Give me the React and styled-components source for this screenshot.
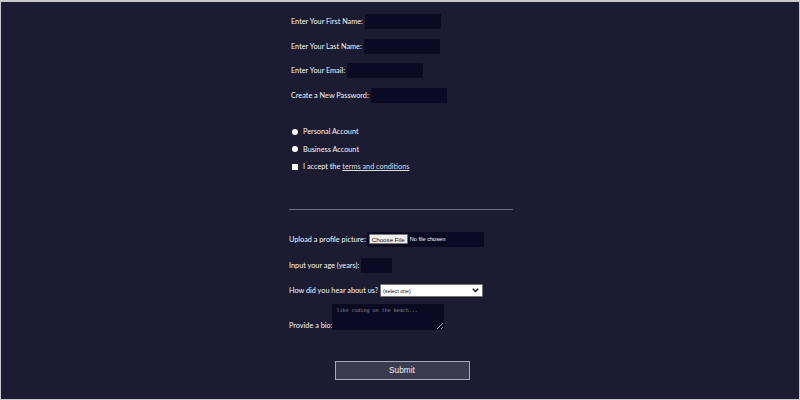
import React from "react";
import styled, { createGlobalStyle } from "styled-components";

const Global = createGlobalStyle`
  html, body { margin: 0; padding: 0; }
  body {
    width: 800px; height: 400px; overflow: hidden;
    background: #1b1b32; color: #f5f6f7;
    font-family: Lato, "Noto Sans", sans-serif;
  }
  * { box-sizing: border-box; }
`;

const Frame = styled.div`
  width: 800px; height: 400px;
  border: 1px solid #c9c9cc;
  border-top-width: 2px;
  background: #1b1b32;
  display: flex; justify-content: center;
`;

const Form = styled.form`
  width: 224px;
  margin-left: 2px;
  display: flex; flex-direction: column;
  font-size: 7.3px;
  padding-top: 12px;
`;

const Section = styled.div`
  display: flex; flex-direction: column;
  gap: ${p => p.$gap}px;
  padding-left: ${p => p.$pl || 0}px;
  margin-top: ${p => p.$mt || 0}px;
`;

const Row = styled.label`
  display: flex; align-items: ${p => p.$align || "center"};
  height: ${p => p.$h || 15}px;
  gap: ${p => p.$gap ?? 2}px;
  white-space: nowrap;
`;

const TextInput = styled.input`
  flex: none;
  width: ${p => p.$w || 76}px; height: 15px;
  background: #0a0a23; border: none; outline: none;
  color: #fff; padding: 0; margin: 0;
`;

const Dot = styled.span`
  width: 6px; height: 6px; background: #fff;
  border-radius: ${p => (p.$square ? "0" : "50%")};
  margin-right: 3px; flex: none;
`;

const Link = styled.a`
  color: #dfdfe2; text-decoration: underline;
`;

const Rule = styled.div`
  height: 1px; background: #6c6c7c;
  margin: 37px 0 22px 0;
`;

const FileBox = styled.span`
  flex: none;
  width: 117px; height: 15px; background: #0a0a23;
  display: flex; align-items: center; gap: 2px; padding-left: 2px;
  font-family: "Liberation Sans", Arial, sans-serif; font-size: 5.6px;
`;

const FileButton = styled.span`
  height: 10px; padding: 0 2px; background: #efefef; color: #111;
  border: 1px solid #767676; border-radius: 1px;
  display: flex; align-items: center; font-size: 6.2px;
`;

const Select = styled.span`
  flex: none;
  width: 103px; height: 13px; background: #fff; color: #111;
  border: 1px solid #767676; border-radius: 1px;
  display: flex; align-items: center; justify-content: space-between;
  padding: 0 3px 0 2px; font-family: "Liberation Sans", Arial, sans-serif;
  font-size: 5.3px;
`;

const TextArea = styled.textarea`
  flex: none;
  width: 112px; height: 26px; background: #0a0a23; border: none; outline: none;
  color: #fff; resize: vertical; padding: 3px 4px;
  font-family: "DejaVu Sans Mono", monospace; font-size: 5px;
  &::placeholder { color: #8a8a98; }
`;

const SubmitButton = styled.button`
  align-self: center; margin-left: 2px; margin-top: 31px;
  width: 135px; height: 19px;
  background: #3b3b4f; color: #f0f0f3;
  border: 1px solid #a9a9b6; padding: 0;
  font-family: "Liberation Sans", Arial, sans-serif; font-size: 8.3px;
`;

export default function App() {
  return (
    <>
      <Global />
      <Frame>
        <Form onSubmit={e => e.preventDefault()}>
          <Section $gap={9.5} $pl={2}>
            <Row>Enter Your First Name:<TextInput /></Row>
            <Row>Enter Your Last Name:<TextInput /></Row>
            <Row>Enter Your Email:<TextInput /></Row>
            <Row>Create a New Password:<TextInput /></Row>
          </Section>
          <Section $gap={7.5} $pl={3} $mt={24}>
            <Row $h={10}><Dot />Personal Account</Row>
            <Row $h={10}><Dot />Business Account</Row>
            <Row $h={10}><Dot $square />I accept the<Link>terms and conditions</Link></Row>
          </Section>
          <Rule />
          <Section $gap={11}>
            <Row $gap={1}>Upload a profile picture:
              <FileBox><FileButton>Choose File</FileButton>No file chosen</FileBox>
            </Row>
            <Row>Input your age (years):<TextInput $w={31} /></Row>
            <Row $h={14}>How did you hear about us?
              <Select>(select one)
                <svg width="7" height="5" viewBox="0 0 7 5"><path d="M0.8 0.8 L3.5 3.6 L6.2 0.8" stroke="#111" strokeWidth="1.4" fill="none" /></svg>
              </Select>
            </Row>
            <Row $h={26} $align="flex-end" $gap={0} style={{ marginTop: -5 }}>Provide a bio:<TextArea placeholder="like coding on the beach..." /></Row>
          </Section>
          <SubmitButton type="submit">Submit</SubmitButton>
        </Form>
      </Frame>
    </>
  );
}
